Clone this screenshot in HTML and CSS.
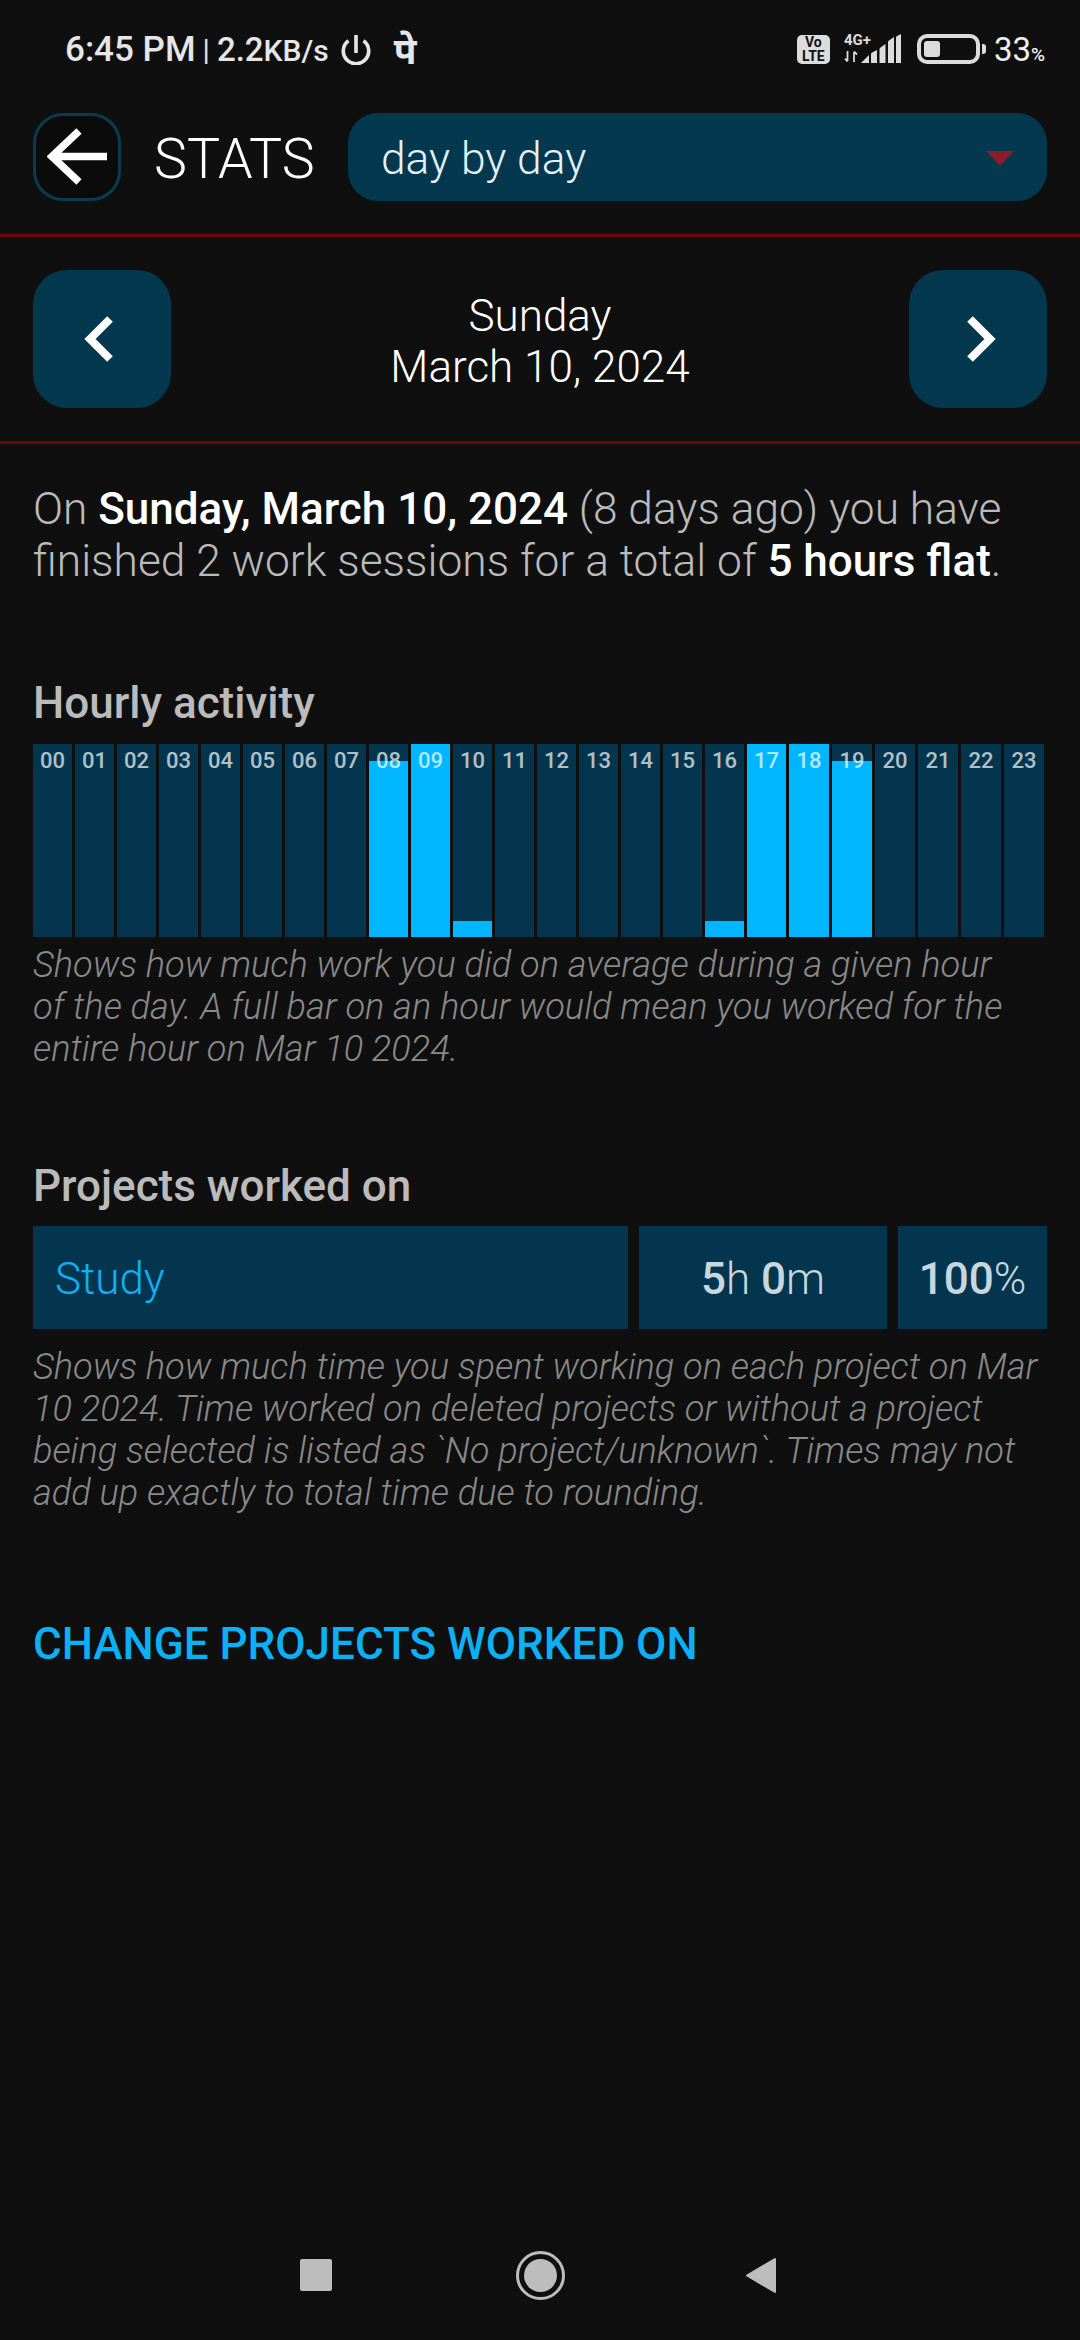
FILE: index.html
```html
<!DOCTYPE html>
<html lang="en">
<head>
  <meta charset="UTF-8" />
  <meta name="viewport" content="width=device-width, initial-scale=1.0" />
  <title>Stats</title>
  <link rel="stylesheet" href="styles.css">
</head>
<body>
  <div class="status-bar">
    <div class="status-left">
      <span class="status-time">6:45 PM</span>
      <span class="status-sep">|</span>
      <span class="status-speed">2.2<span class="status-unit">KB/s</span></span>
      <svg class="status-power" viewBox="0 0 30 30" width="30" height="30">
        <path d="M7.500 5.800a12.700 12.700 0 1 0 15 0" fill="none" stroke="#e6e6e6" stroke-width="3.600"/>
        <path d="M15 0v18" fill="none" stroke="#e6e6e6" stroke-width="3.600"/>
      </svg>
      <span class="status-notif">पे</span>
    </div>
    <div class="status-right">
      <div class="volte"><span>Vo</span><span>LTE</span></div>
      <div class="network">
        <div class="network-type">
          <span>4G+</span>
          <svg viewBox="0 0 14 11" width="14" height="11">
            <path d="M3.500 0v10M1 7.500l2.500 3M10 11V1M10 0.500l3 3" fill="none" stroke="#dcdcdc" stroke-width="1.800"/>
          </svg>
        </div>
        <svg class="signal" viewBox="0 0 40 29" width="40" height="29">
          <path d="M0 29L8 21V29Z M10 29V20Q10 19 11 18.500L16 16V29Z M18.500 29V15Q18.500 14 19.500 13.500L24.500 10V29Z M27 29V8Q27 7 28 6.500L33 3V29Z M35 29V3.500Q35 2.500 36 2L40 0V29Z" fill="#dcdcdc"/>
        </svg>
      </div>
      <div class="battery"><div class="battery-level"></div></div>
      <div class="battery-nub"></div>
      <span class="battery-text">33<span class="battery-pct">%</span></span>
    </div>
  </div>

  <div class="top-bar">
    <button class="back-btn">
      <svg viewBox="0 0 60 60" width="60" height="60">
        <path d="M60 29.500H7M32 4L5 29.500L32 55" fill="none" stroke="#fff" stroke-width="7.500"/>
      </svg>
    </button>
    <div class="page-title">STATS</div>
    <div class="mode-select">
      <span>day by day</span>
      <div class="mode-arrow"></div>
    </div>
  </div>

  <div class="date-nav">
    <button class="nav-btn">
      <svg class="chevron-prev" viewBox="0 0 30 46" width="30" height="46">
        <path d="M26 3L6 23L26 43" fill="none" stroke="#fff" stroke-width="8"/>
      </svg>
    </button>
    <div class="date-label">Sunday<br>March 10, 2024</div>
    <button class="nav-btn">
      <svg class="chevron-next" viewBox="0 0 30 46" width="30" height="46">
        <path d="M4 3L24 23L4 43" fill="none" stroke="#fff" stroke-width="8"/>
      </svg>
    </button>
  </div>

  <div class="content">
    <p class="summary">On <strong>Sunday, March 10, 2024</strong> (8 days ago) you have finished 2 work sessions for a total of <strong>5 hours flat</strong>.</p>

    <h2 class="section-title hourly-title">Hourly activity</h2>
    <div class="hours">
      <div class="hour"><span>00</span></div>
      <div class="hour"><span>01</span></div>
      <div class="hour"><span>02</span></div>
      <div class="hour"><span>03</span></div>
      <div class="hour"><span>04</span></div>
      <div class="hour"><span>05</span></div>
      <div class="hour"><span>06</span></div>
      <div class="hour"><span>07</span></div>
      <div class="hour"><div class="fill fill-most"></div><span>08</span></div>
      <div class="hour"><div class="fill fill-full"></div><span>09</span></div>
      <div class="hour"><div class="fill fill-low"></div><span>10</span></div>
      <div class="hour"><span>11</span></div>
      <div class="hour"><span>12</span></div>
      <div class="hour"><span>13</span></div>
      <div class="hour"><span>14</span></div>
      <div class="hour"><span>15</span></div>
      <div class="hour"><div class="fill fill-low"></div><span>16</span></div>
      <div class="hour"><div class="fill fill-full"></div><span>17</span></div>
      <div class="hour"><div class="fill fill-full"></div><span>18</span></div>
      <div class="hour"><div class="fill fill-most"></div><span>19</span></div>
      <div class="hour"><span>20</span></div>
      <div class="hour"><span>21</span></div>
      <div class="hour"><span>22</span></div>
      <div class="hour"><span>23</span></div>
    </div>
    <p class="hint">Shows how much work you did on average during a given hour<br>of the day. A full bar on an hour would mean you worked for the entire hour on Mar 10 2024.</p>

    <h2 class="section-title projects-title">Projects worked on</h2>
    <div class="project-row">
      <div class="project-name">Study</div>
      <div class="project-time"><b>5</b>h <b>0</b>m</div>
      <div class="project-pct"><b>100</b>%</div>
    </div>
    <p class="hint project-hint">Shows how much time you spent working on each project on Mar 10 2024. Time worked on deleted projects or without a project being selected is listed as `No project/unknown`. Times may not add up exactly to total time due to rounding.</p>

    <div class="change-link">CHANGE PROJECTS WORKED ON</div>
  </div>

  <div class="nav-bar">
    <div class="nav-square"></div>
    <div class="nav-home"><div class="nav-home-dot"></div></div>
    <svg class="nav-back" viewBox="0 0 32 37" width="32" height="37">
      <path d="M30 2V35L2 18.500Z" fill="#bdbdbd" stroke="#bdbdbd" stroke-width="2" stroke-linejoin="round"/>
    </svg>
  </div>
</body>
</html>
```

FILE: styles.css
```css
* {
  box-sizing: border-box;
}
html, body {
  margin: 0;
  height: 100%;
}
body {
  width: 1080px;
  height: 2340px;
  display: flex;
  flex-direction: column;
  background-color: #0f0f0f;
  color: #fff;
  font-family: Roboto, "Noto Sans", sans-serif;
  overflow: hidden;
}
button {
  border: none;
  padding: 0;
  display: flex;
  align-items: center;
  justify-content: center;
}

/* status bar */
.status-bar {
  height: 113px;
  padding: 33px 35px 0 65px;
  display: flex;
  justify-content: space-between;
  align-items: flex-start;
  color: #e6e6e6;
}
.status-left {
  display: flex;
  align-items: center;
  height: 32px;
  font-size: 35px;
  font-weight: 500;
}
.status-sep {
  font-size: 30px;
  font-weight: 400;
  margin: 0 7px;
}
.status-speed {
  font-size: 33px;
}
.status-unit {
  font-size: 30px;
}
.status-power {
  margin: 2px 0 0 12px;
}
.status-notif {
  margin-left: 23px;
  font-size: 37px;
  font-weight: 700;
  font-family: "Noto Sans", "Noto Sans Devanagari", sans-serif;
}
.status-right {
  display: flex;
  align-items: flex-start;
}
.volte {
  width: 33px;
  height: 29px;
  margin-top: 2px;
  background-color: #dcdcdc;
  border-radius: 5px;
  color: #111;
  font-size: 14px;
  font-weight: 700;
  line-height: 13.500px;
  display: flex;
  flex-direction: column;
  align-items: center;
  justify-content: center;
}
.network {
  display: flex;
  align-items: flex-start;
  margin-left: 14px;
}
.network-type {
  width: 29px;
  display: flex;
  flex-direction: column;
  gap: 4px;
  font-size: 15px;
  font-weight: 700;
  line-height: 14px;
  color: #dcdcdc;
}
.signal {
  margin: 1px 0 0 -12px;
}
.battery {
  width: 63px;
  height: 30px;
  margin: 1px 0 0 16px;
  border: 4px solid #dcdcdc;
  border-radius: 10px;
  padding: 3px;
}
.battery-level {
  width: 16px;
  height: 100%;
  background-color: #dcdcdc;
  border-radius: 3px;
}
.battery-nub {
  width: 4px;
  height: 10px;
  margin: 11px 0 0 2px;
  background-color: #dcdcdc;
  border-radius: 0 3px 3px 0;
}
.battery-text {
  margin-left: 8px;
  font-size: 33px;
  line-height: 33px;
  color: #eee;
}
.battery-pct {
  font-size: 19px;
  font-weight: 500;
}

/* header */
.top-bar {
  height: 124px;
  padding: 0 33px;
  display: flex;
  align-items: flex-start;
  border-bottom: 3px solid #6b0808;
}
.back-btn {
  width: 88px;
  height: 88px;
  background-color: #0b0b0b;
  border: 3px solid #0c3a50;
  border-radius: 30px;
}
.page-title {
  margin-left: 33px;
  width: 194px;
  height: 88px;
  padding-top: 3px;
  line-height: 88px;
  font-size: 55.500px;
  font-weight: 300;
}
.mode-select {
  flex: 1;
  height: 88px;
  padding: 3px 33px 0;
  display: flex;
  justify-content: space-between;
  align-items: center;
  background-color: #03384f;
  border-radius: 30px;
  font-size: 44.300px;
  font-weight: 300;
  color: #e6f0f5;
}
.mode-arrow {
  width: 0;
  height: 0;
  border-left: 14px solid transparent;
  border-right: 14px solid transparent;
  border-top: 15px solid #8a1c2b;
}
.date-nav {
  height: 207px;
  padding: 33px 33px 0;
  display: flex;
  justify-content: space-between;
  align-items: flex-start;
  border-bottom: 3px solid #6b0808;
}
.nav-btn {
  width: 138px;
  height: 138px;
  background-color: #03384f;
  border-radius: 34px;
}
.chevron-prev {
  margin-right: 6px;
}
.chevron-next {
  margin-left: 6px;
}
.date-label {
  height: 138px;
  padding-top: 21px;
  text-align: center;
  font-size: 44px;
  font-weight: 300;
  line-height: 51px;
}

/* body */
.content {
  flex: 1;
  padding: 0 33px;
}
.summary {
  margin: 39px 0 0;
  font-size: 44.300px;
  font-weight: 300;
  line-height: 52px;
  color: #bbb;
}
.summary strong {
  font-size: 44px;
  font-weight: 500;
  color: #fff;
}
.section-title {
  margin: 0;
  font-size: 44px;
  font-weight: 500;
  line-height: 50px;
  color: #bbb;
}
.hourly-title {
  margin-top: 91px;
}
.hours {
  height: 193px;
  margin-top: 16px;
  display: grid;
  grid-template-columns: repeat(18, 39px) repeat(6, 40px);
  column-gap: 3px;
}
.hour {
  position: relative;
  background-color: #03364e;
  text-align: center;
  font-size: 22px;
  font-weight: 500;
  line-height: 30px;
  color: rgba(255, 255, 255, 0.7);
}
.hour span {
  position: relative;
  top: 2px;
}
.fill {
  position: absolute;
  left: 0;
  right: 0;
  bottom: 0;
  background-color: #00b7ff;
}
.fill-full {
  height: 100%;
}
.fill-most {
  height: 91%;
}
.fill-low {
  height: 8.300%;
}
.hint {
  margin: 7px 0 0;
  font-size: 36.200px;
  font-weight: 300;
  font-style: italic;
  line-height: 42px;
  color: #8a8a8a;
}
.project-hint {
  margin-top: 17px;
}
.projects-title {
  margin-top: 91px;
}
.project-row {
  margin-top: 15px;
  display: grid;
  grid-template-columns: 595px 248px 1fr;
  grid-template-rows: 103px;
  column-gap: 11px;
  font-size: 44px;
  font-weight: 300;
  line-height: 107px;
  color: #c8d6de;
}
.project-row b {
  font-weight: 500;
}
.project-name {
  padding-left: 22px;
  background-color: #03364e;
  color: #0fb0f5;
}
.project-time, .project-pct {
  background-color: #03364e;
  text-align: center;
}
.change-link {
  margin-top: 104px;
  font-size: 44px;
  font-weight: 500;
  line-height: 52px;
  color: #0cb0f5;
}

/* android nav bar */
.nav-bar {
  height: 140px;
  position: relative;
}
.nav-square {
  position: absolute;
  left: 300px;
  top: 59px;
  width: 32px;
  height: 32px;
  background-color: #bdbdbd;
  border-radius: 2px;
}
.nav-home {
  position: absolute;
  left: 516px;
  top: 51px;
  width: 49px;
  height: 49px;
  border: 3px solid #bdbdbd;
  border-radius: 50%;
  display: flex;
  align-items: center;
  justify-content: center;
}
.nav-home-dot {
  width: 33px;
  height: 33px;
  background-color: #bdbdbd;
  border-radius: 50%;
}
.nav-back {
  position: absolute;
  left: 745px;
  top: 57px;
}
```
